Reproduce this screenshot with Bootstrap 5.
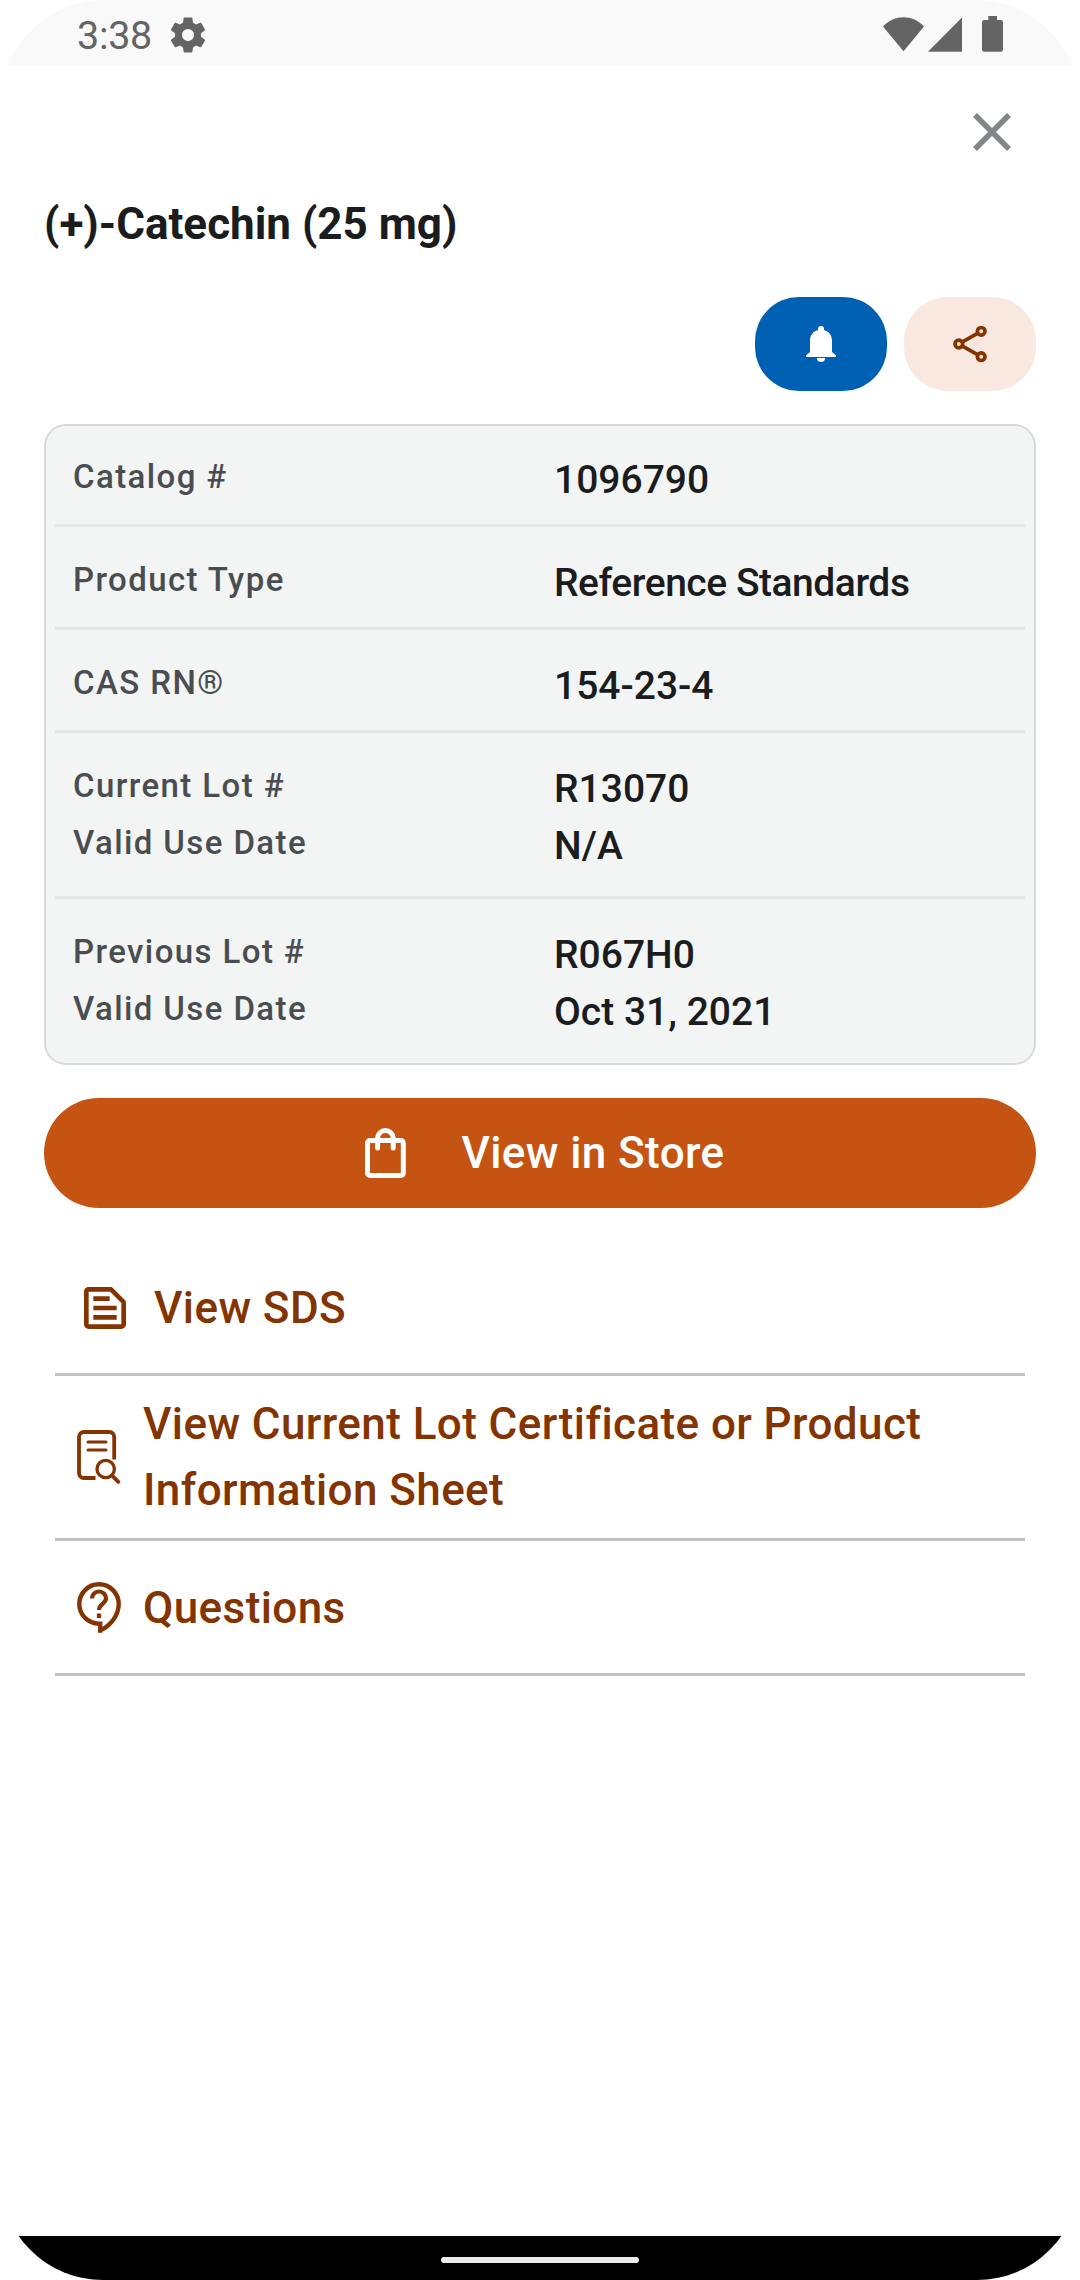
<!DOCTYPE html>
<html lang="en">
  <head>
    <meta charset="UTF-8" />
    <meta name="viewport" content="width=device-width, initial-scale=1.0" />
    <title>(+)-Catechin (25 mg)</title>
    <link
      href="https://cdn.jsdelivr.net/npm/bootstrap@5.3.2/dist/css/bootstrap.min.css"
      rel="stylesheet"
    />
    <style>
      body {
        background-color: #fff;
        color: #1a1c1d;
        font-family: Roboto, "Liberation Sans", sans-serif;
        font-weight: 500;
      }
      svg {
        display: block;
        flex-shrink: 0;
      }
      .screen {
        width: 1080px;
        height: 2280px;
        border-radius: 105px 105px 103px 103px;
      }
      /* Status bar */
      .status-bar {
        height: 66px;
        padding: 0 77px 0 77px;
        background-color: #f9f9f9;
        color: #646464;
      }
      .clock {
        font-size: 39.5px;
        font-weight: 400;
        line-height: 46px;
        margin-top: 13px;
        letter-spacing: -0.3px;
      }
      .gear {
        margin: 14px 0 0 15.5px;
      }
      .status-icons {
        margin-top: 16px;
      }
      /* Header */
      .close-row {
        height: 132px;
        padding: 34px 56px 0 0;
      }
      .btn-close-sheet {
        color: #82868a;
      }
      .product-title {
        height: 99px;
        padding-left: 44px;
        font-size: 44px;
        font-weight: 700;
        line-height: 52px;
      }
      .actions {
        gap: 17px;
        padding-right: 44px;
      }
      .btn-pill {
        width: 132px;
        height: 94px;
        border-radius: 44px;
      }
      .btn-notify {
        background-color: #0061b4;
        color: #fff;
      }
      .btn-share {
        background-color: #f9e8e0;
        color: #833400;
      }
      /* Product details */
      .details {
        margin: 33px 44px 0;
        height: 641px;
        padding: 0 9px;
        border: 2px solid #d8dada;
        border-radius: 22px;
        background-color: #f3f5f4;
      }
      .detail-row {
        height: 103px;
        padding: 24px 18px 0;
        border-bottom: 3px solid #e5e6e8;
        line-height: 57px;
      }
      .detail-row:first-child {
        height: 101px;
        padding-top: 22px;
      }
      .detail-row.two-lines {
        height: 166px;
      }
      .detail-row:last-child {
        border-bottom: 0;
      }
      .detail-label {
        width: 481px;
        color: #4a4d50;
        font-size: 33px;
        letter-spacing: 1.4px;
      }
      .detail-value {
        padding-top: 4px;
        font-size: 39px;
      }
      .detail-value.tight {
        letter-spacing: -0.47px;
      }
      /* Store button */
      .btn-store {
        height: 110px;
        margin: 33px 44px 0;
        border-radius: 55px;
        background-color: #c55312;
        color: #fff;
        font-size: 44px;
        font-weight: 500;
        letter-spacing: 0.4px;
      }
      .btn-store svg {
        margin: 0 55px 0 10px;
      }
      /* Links */
      .links {
        margin: 65px 55px 0;
      }
      .link-row {
        gap: 22px;
        border-bottom: 3px solid #c1c2c4;
        color: #833400;
        font-size: 44px;
        line-height: 66px;
        letter-spacing: 0.41px;
        padding-left: 22px;
      }
      .link-sds {
        gap: 28px;
        height: 103px;
        padding-left: 29px;
        padding-bottom: 31px;
      }
      .link-cert {
        height: 165px;
      }
      .link-questions {
        height: 135px;
        padding-top: 2px;
      }
      .nav-area {
        height: 44px;
        background-color: #000;
      }
      .nav-handle {
        width: 198px;
        height: 6px;
        margin-top: 4px;
        border-radius: 3px;
        background-color: #ebedeb;
      }
    </style>
  </head>
  <body>
    <div class="screen d-flex flex-column overflow-hidden">
      <!-- Status bar -->
      <div class="status-bar d-flex align-items-start">
        <span class="clock">3:38</span>
        <svg class="gear" width="42" height="42" viewBox="0 0 24 24" fill="currentColor">
          <path d="M19.43 12.98c.04-.32.07-.64.07-.98s-.03-.66-.07-.98l2.11-1.65c.19-.15.24-.42.12-.64l-2-3.46c-.12-.22-.39-.3-.61-.22l-2.49 1c-.52-.4-1.08-.73-1.69-.98l-.38-2.65A.488.488 0 0 0 14 2h-4c-.25 0-.46.18-.49.42l-.38 2.65c-.61.25-1.17.59-1.69.98l-2.49-1c-.23-.09-.49 0-.61.22l-2 3.46c-.13.22-.07.49.12.64l2.11 1.65c-.04.32-.07.65-.07.98s.03.66.07.98l-2.11 1.65c-.19.15-.24.42-.12.64l2 3.46c.12.22.39.3.61.22l2.49-1c.52.4 1.08.73 1.69.98l.38 2.65c.03.24.24.42.49.42h4c.25 0 .46-.18.49-.42l.38-2.65c.61-.25 1.17-.59 1.69-.98l2.49 1c.23.09.49 0 .61-.22l2-3.46c.12-.22.07-.49-.12-.64l-2.11-1.65zM12 15.5a3.5 3.5 0 1 1 0-7 3.5 3.5 0 0 1 0 7z" />
        </svg>
        <svg class="status-icons ms-auto" width="120" height="36" viewBox="0 0 120 36" fill="currentColor">
          <path d="M0 10.500C11.500-1.700 29.500-1.700 41 10.500L20.500 35.300z" />
          <path d="M45 35.700L79 1.500V35.700z" />
          <path d="M105.300 4V0h8.700V4h3.700A2.300 2.300 0 0 1 120 6.300V33.500a2.300 2.300 0 0 1-2.300 2.300H101.300A2.300 2.300 0 0 1 99 33.500V6.300A2.300 2.300 0 0 1 101.300 4z" />
        </svg>
      </div>

      <div class="close-row d-flex justify-content-end align-items-start">
        <button type="button" class="btn btn-close-sheet p-0 border-0" aria-label="Close">
          <svg width="64" height="64" viewBox="0 0 64 64" fill="none" stroke="currentColor" stroke-width="5.600">
            <path d="M15 15L49 49M49 15L15 49" />
          </svg>
        </button>
      </div>
      <h1 class="product-title m-0">(+)-Catechin (25 mg)</h1>

      <!-- Actions -->
      <div class="actions d-flex justify-content-end">
        <button type="button" class="btn btn-pill btn-notify border-0 p-0 d-flex align-items-center justify-content-center" aria-label="Notify">
          <svg width="30" height="36" viewBox="0 0 30 36" fill="currentColor">
            <path d="M15 0a3 3 0 0 1 3 3v1c5 1.400 8 5.500 8 10.500V26l4 3.500V31H0v-1.500L4 26V14.500C4 9.500 7 5.400 12 4V3a3 3 0 0 1 3-3z" />
            <path d="M11 32h8a4 4 0 0 1-8 0z" />
          </svg>
        </button>
        <button type="button" class="btn btn-pill btn-share border-0 p-0 d-flex align-items-center justify-content-center" aria-label="Share">
          <svg width="34" height="38" viewBox="0 0 34 38" fill="none" stroke="currentColor" stroke-width="3.700">
            <circle cx="28.200" cy="6.300" r="3.800" />
            <circle cx="5.800" cy="19" r="3.800" />
            <circle cx="28.200" cy="31.700" r="3.800" />
            <path d="M9 17.200L25 8.100M9 20.800L25 29.900" />
          </svg>
        </button>
      </div>

      <!-- Product details -->
      <div class="details">
        <div class="detail-row d-flex">
          <div class="detail-label">Catalog #</div>
          <div class="detail-value">1096790</div>
        </div>
        <div class="detail-row d-flex">
          <div class="detail-label">Product Type</div>
          <div class="detail-value tight">Reference Standards</div>
        </div>
        <div class="detail-row d-flex">
          <div class="detail-label">CAS RN®</div>
          <div class="detail-value">154-23-4</div>
        </div>
        <div class="detail-row two-lines d-flex">
          <div class="detail-label">Current Lot #<br />Valid Use Date</div>
          <div class="detail-value">R13070<br />N/A</div>
        </div>
        <div class="detail-row two-lines d-flex">
          <div class="detail-label">Previous Lot #<br />Valid Use Date</div>
          <div class="detail-value">R067H0<br />Oct 31, 2021</div>
        </div>
      </div>

      <button type="button" class="btn btn-store border-0 p-0 d-flex align-items-center justify-content-center">
        <svg width="41" height="50" viewBox="0 0 41 50" fill="none" stroke="currentColor" stroke-width="5">
          <rect x="2.500" y="12.500" width="35.800" height="35" rx="2.500" />
          <path d="M12.600 20V10a7.800 7.500 0 0 1 15.600 0V20" stroke-linecap="round" />
        </svg>
        <span>View in Store</span>
      </button>

      <!-- Links -->
      <div class="links">
        <div class="link-row link-sds d-flex align-items-center">
          <svg width="42" height="42" viewBox="3 3 18 18" fill="currentColor">
            <path d="M14.170 5L19 9.830V19H5V5h9.170m0-2H5c-1.100 0-2 .9-2 2v14c0 1.100.9 2 2 2h14c1.100 0 2-.9 2-2V9.830c0-.53-.21-1.040-.59-1.410l-4.830-4.830c-.37-.38-.88-.59-1.410-.59zM7 15h10v2H7zm0-4h10v2H7zm0-4h7v2H7z" />
          </svg>
          <span>View SDS</span>
        </div>
        <div class="link-row link-cert d-flex align-items-center">
          <svg width="44" height="54" viewBox="0 0 44 54" fill="none" stroke="currentColor" stroke-width="3.800">
            <path d="M37.200 29.500V7a5 5 0 0 0-5-5H7a5 5 0 0 0-5 5V43a5 5 0 0 0 5 5H18.500" />
            <path d="M11 12H29M11 20H29" stroke-width="3" stroke-linecap="round" />
            <circle cx="28.700" cy="39" r="8.700" stroke-width="3.300" />
            <path d="M35 45.500L41.300 51.800" stroke-linecap="round" />
          </svg>
          <span>View Current Lot Certificate or Product<br />Information Sheet</span>
        </div>
        <div class="link-row link-questions d-flex align-items-center">
          <svg width="44" height="52" viewBox="0 0 44 52" fill="none" stroke="currentColor" stroke-width="4.400">
            <path d="M23.200 50.800V41.700H22A19.700 19.700 0 1 1 41.700 22C41.700 33 34 43.500 23.200 48.500" />
            <path d="M15 16.500a7 7 0 0 1 14 0C29 21.500 22 22 22 28" stroke-width="4.200" />
            <path d="M22 31.500v4.500" />
          </svg>
          <span>Questions</span>
        </div>
      </div>

      <div class="nav-area mt-auto d-flex align-items-center justify-content-center">
        <div class="nav-handle"></div>
      </div>
    </div>

    <script src="https://cdn.jsdelivr.net/npm/bootstrap@5.3.2/dist/js/bootstrap.bundle.min.js"></script>
  </body>
</html>
